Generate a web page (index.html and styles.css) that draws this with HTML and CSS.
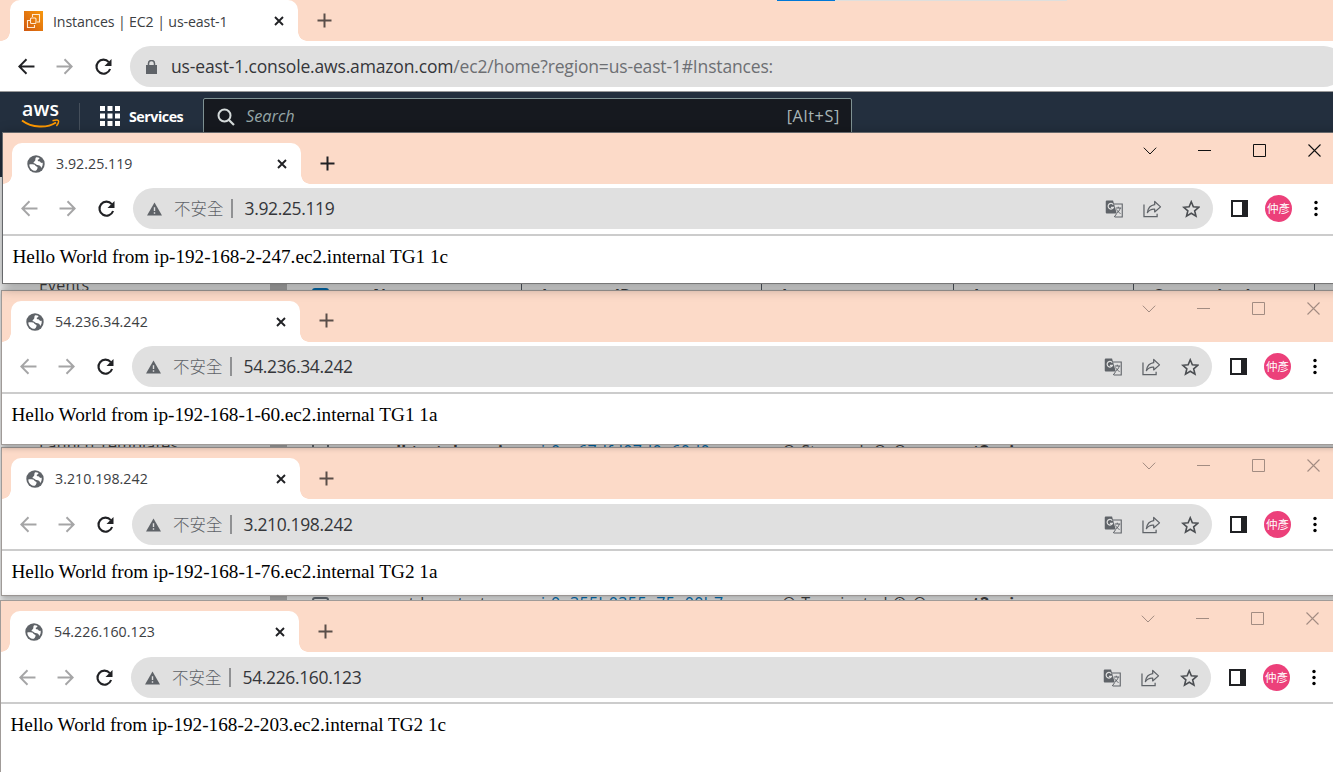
FILE: index.html
```html
<!DOCTYPE html>
<html lang="zh-Hant">
<head>
<meta charset="utf-8">
<title>Instances | EC2 | us-east-1</title>
<link rel="stylesheet" href="styles.css">
</head>
<body>
<svg class="defs" width="0" height="0" aria-hidden="true">
  <defs>
    <linearGradient id="ec2fill" x1="0" y1="1" x2="1" y2="0"><stop offset="0" stop-color="#cf5710"/><stop offset="1" stop-color="#f8980c"/></linearGradient>
    <symbol id="globe" viewBox="0 0 18 18"><circle cx="9" cy="9" r="8.7" fill="#5f6368"/><path d="M2.300 9.400c1.700-.2 3.300-.1 4.600.2 1.500.3 1.300 1.500 2.600 1.900 1.200.3 1.300 1.200.8 2.300-.4.900-.7 1.500-1.500 2C5.200 15.900 2.300 13 2.300 9.400zM8.900 2.400c1.300-.2 2.600 0 3.600.6-.2 1-.9 1.500-1.700 1.700-.2 1.200.3 1.500 1.400 1.500 1 0 1 .9 1.600 1.400.6.400 1.200.3 1.900.2.200 2.200-.3 3.800-1.400 5.200-.5-.9-.6-2.100-1.800-2.400-1.600-.4-2.200.1-3.200-1-.8-.9-2-1-2.800-1.500.1-1.200 1.100-1.500 1.600-2.300.5-.9 0-2.500.8-3.400z" fill="#fff"/></symbol>
    <symbol id="close" viewBox="0 0 10 10"><path d="M1 1l8 8M9 1l-8 8" stroke="currentColor" stroke-width="1.900" fill="none"/></symbol>
    <symbol id="plus" viewBox="0 0 15 15"><path d="M7.500.5v14M.5 7.500h14" stroke="currentColor" stroke-width="2" fill="none"/></symbol>
    <symbol id="back" viewBox="0 0 16 16"><path d="M15.500 8H1.500M8 1.200L1.200 8 8 14.800" stroke="currentColor" stroke-width="1.800" fill="none"/></symbol>
    <symbol id="forward" viewBox="0 0 16 16"><path d="M.5 8h14M8 1.200L14.800 8 8 14.800" stroke="currentColor" stroke-width="1.800" fill="none"/></symbol>
    <symbol id="reload" viewBox="0 0 18 18"><path d="M14.300 4.100A7 7 0 1 0 15.600 11" stroke="#202124" stroke-width="2.100" fill="none"/><path d="M17 1v7h-7z" fill="#202124"/></symbol>
    <symbol id="warn" viewBox="0 0 16 14"><path d="M8 0l8 14H0z" fill="#5f6368"/><path d="M8 5v4.200M8 10.500v1.600" stroke="#e0e0e0" stroke-width="1.500"/></symbol>
    <symbol id="translate" viewBox="0 0 18 18"><path d="M7 4h10v13H9.500" fill="#e0e0e0" stroke="#5f6368" stroke-width="1.100"/><path d="M1.500.5h6.300l3.700 13H1.500a1 1 0 0 1-1-1v-11a1 1 0 0 1 1-1z" fill="#5f6368"/><path d="M8 4.600A2.800 2.800 0 1 0 8.300 7.300H5.700" stroke="#e0e0e0" stroke-width="1.200" fill="none"/><path d="M10.500 8h5.500M13 6.700V8M15 8c-.6 2.400-2 4-3.500 5M11.300 9.500c1 2 2.200 3 4 4M9 17l2.500-3.500" stroke="#5f6368" stroke-width="1" fill="none"/></symbol>
    <symbol id="share" viewBox="0 0 19 18"><path d="M1 4.500v12.400h13.500v-3" stroke="#5f6368" stroke-width="1.300" fill="none"/><path d="M12 1.300l6 5.500-6 5.200V9.200c-3.300-.2-5.600.8-7.500 3.600.6-4.600 3-7.600 7.500-8.200z" stroke="#5f6368" stroke-width="1.300" fill="none" stroke-linejoin="round"/></symbol>
    <symbol id="star" viewBox="0 0 18 18"><path d="M9 1.800l2.100 5 5.400.5-4.100 3.500 1.300 5.300L9 13.300l-4.700 2.800 1.300-5.300L1.500 7.300l5.400-.5z" stroke="#4b4e52" stroke-width="1.600" fill="none"/></symbol>
    <symbol id="panel" viewBox="0 0 17 17"><path d="M0 0h17v17H0z" fill="#202124"/><path d="M2 2h9v13H2z" fill="#fff"/></symbol>
    <symbol id="dots" viewBox="0 0 4 16"><circle cx="2" cy="2" r="1.700"/><circle cx="2" cy="8" r="1.700"/><circle cx="2" cy="14" r="1.700"/></symbol>
    <symbol id="chev" viewBox="0 0 14 14"><path d="M.8 3.700L7 10l6.200-6.300" stroke="currentColor" stroke-width="1" fill="none"/></symbol>
    <symbol id="mini" viewBox="0 0 14 14"><path d="M0 6.500h13" stroke="currentColor" stroke-width="1"/></symbol>
    <symbol id="maxi" viewBox="0 0 14 14"><path d="M.5.5h12v12H.5z" stroke="currentColor" stroke-width="1" fill="none"/></symbol>
    <symbol id="exit" viewBox="0 0 14 14"><path d="M.5.5l12 12M12.500.5l-12 12" stroke="currentColor" stroke-width="1.100"/></symbol>
  </defs>
</svg>

<main class="desktop">
  <section class="window base">
    <div class="strip">
      <div class="tab">
        <svg class="fav" viewBox="0 0 19 20"><path d="M0 0h19v20H0z" fill="url(#ec2fill)"/><g stroke="#ffe9d2" stroke-width="1.100" fill="none"><path d="M8.500 6V3.500h7v7.500h-2.500"/><rect x="6.500" y="7" width="5.500" height="5.500" rx="1"/><path d="M6 9.500H3.500v7h7V14"/></g></svg>
        <span class="title">Instances | EC2 | us-east-1</span>
        <svg class="close"><use href="#close"/></svg>
      </div>
      <svg class="plus"><use href="#plus"/></svg>
    </div>
    <div class="toolbar">
      <svg class="nav on"><use href="#back"/></svg>
      <svg class="nav"><use href="#forward"/></svg>
      <svg class="reload"><use href="#reload"/></svg>
      <div class="omnibox">
        <svg class="lock" viewBox="0 0 11 14"><path d="M0 5h11v9H0z" fill="#5f6368"/><path d="M2.500 6V3.500a3 3 0 0 1 6 0V6" stroke="#5f6368" stroke-width="1.500" fill="none"/></svg>
        <span class="url">us-east-1.console.aws.amazon.com<span class="path">/ec2/home?region=us-east-1#Instances:</span></span>
      </div>
    </div>
    <header class="awsnav">
      <div class="logo"><span>aws</span><svg viewBox="0 0 40 10"><path d="M1 1.500C11 9 26 9.500 35 3.500" stroke="#f90" stroke-width="2" fill="none"/><path d="M31.500 1.800c3-.9 5.300-.9 5.800-.2.500.8-.3 3.400-1.900 5.300" stroke="#f90" stroke-width="1.500" fill="none"/></svg></div>
      <i class="rule"></i>
      <svg class="grid" viewBox="0 0 20 20" fill="#fff"><path d="M0 0h5v5H0zM7.500 0h5v5h-5zM15 0h5v5h-5zM0 7.500h5v5H0zM7.500 7.500h5v5h-5zM15 7.500h5v5h-5zM0 15h5v5H0zM7.500 15h5v5h-5zM15 15h5v5h-5z"/></svg>
      <b class="services">Services</b>
      <div class="search">
        <svg viewBox="0 0 18 18"><circle cx="7.500" cy="7.500" r="6" stroke="#d5dbdb" stroke-width="2" fill="none"/><path d="M12 12l5 5" stroke="#d5dbdb" stroke-width="2.200"/></svg>
        <em>Search</em><span class="hint">[Alt+S]</span>
      </div>
    </header>
    <div class="console">
      <aside class="side"><span>Events</span><span>Launch Templates</span></aside>
      <i class="scroll"></i>
      <div class="table">
        <div class="row head"><i class="box full"></i><b class="sort">Name <small>▲</small></b><b>Instance ID</b><b>Instance state</b><b>Instance type</b><b>Status check</b><b></b></div>
        <div class="row r1"><i class="box"></i><b>wall-test-demo-i</b><a>i-0ac67dfd07d0a60d0</a><span>⊖ Stopped &nbsp;⊕ ⊖</span><b class="type">t2.micro</b></div>
        <div class="row r2"><i class="box"></i><em>eventdemotest-s</em><a>i-0e355b0355a75a00b7</a><span>⊖ Terminated ⊕ ⊖</span><b class="type">t2.micro</b></div>
      </div>
    </div>
  </section>

  <section class="window w1">
    <div class="strip">
      <div class="tab"><svg class="fav"><use href="#globe"/></svg><span class="title">3.92.25.119</span><svg class="close"><use href="#close"/></svg></div>
      <svg class="plus"><use href="#plus"/></svg>
      <div class="controls"><svg><use href="#chev"/></svg><svg><use href="#mini"/></svg><svg><use href="#maxi"/></svg><svg><use href="#exit"/></svg></div>
    </div>
    <div class="toolbar">
      <svg class="nav"><use href="#back"/></svg><svg class="nav"><use href="#forward"/></svg><svg class="reload"><use href="#reload"/></svg>
      <div class="omnibox"><svg class="warn"><use href="#warn"/></svg><span class="unsafe">不安全</span><i class="sep"></i><span class="url">3.92.25.119</span>
        <div class="actions"><svg><use href="#translate"/></svg><svg><use href="#share"/></svg><svg><use href="#star"/></svg></div></div>
      <svg class="panel"><use href="#panel"/></svg><span class="avatar">仲彥</span><svg class="dots"><use href="#dots"/></svg>
    </div>
    <p class="page">Hello World from ip-192-168-2-247.ec2.internal TG1 1c</p>
  </section>

  <section class="window w2 idle">
    <div class="strip">
      <div class="tab"><svg class="fav"><use href="#globe"/></svg><span class="title">54.236.34.242</span><svg class="close"><use href="#close"/></svg></div>
      <svg class="plus"><use href="#plus"/></svg>
      <div class="controls"><svg><use href="#chev"/></svg><svg><use href="#mini"/></svg><svg><use href="#maxi"/></svg><svg><use href="#exit"/></svg></div>
    </div>
    <div class="toolbar">
      <svg class="nav"><use href="#back"/></svg><svg class="nav"><use href="#forward"/></svg><svg class="reload"><use href="#reload"/></svg>
      <div class="omnibox"><svg class="warn"><use href="#warn"/></svg><span class="unsafe">不安全</span><i class="sep"></i><span class="url">54.236.34.242</span>
        <div class="actions"><svg><use href="#translate"/></svg><svg><use href="#share"/></svg><svg><use href="#star"/></svg></div></div>
      <svg class="panel"><use href="#panel"/></svg><span class="avatar">仲彥</span><svg class="dots"><use href="#dots"/></svg>
    </div>
    <p class="page">Hello World from ip-192-168-1-60.ec2.internal TG1 1a</p>
  </section>

  <section class="window w3 idle">
    <div class="strip">
      <div class="tab"><svg class="fav"><use href="#globe"/></svg><span class="title">3.210.198.242</span><svg class="close"><use href="#close"/></svg></div>
      <svg class="plus"><use href="#plus"/></svg>
      <div class="controls"><svg><use href="#chev"/></svg><svg><use href="#mini"/></svg><svg><use href="#maxi"/></svg><svg><use href="#exit"/></svg></div>
    </div>
    <div class="toolbar">
      <svg class="nav"><use href="#back"/></svg><svg class="nav"><use href="#forward"/></svg><svg class="reload"><use href="#reload"/></svg>
      <div class="omnibox"><svg class="warn"><use href="#warn"/></svg><span class="unsafe">不安全</span><i class="sep"></i><span class="url">3.210.198.242</span>
        <div class="actions"><svg><use href="#translate"/></svg><svg><use href="#share"/></svg><svg><use href="#star"/></svg></div></div>
      <svg class="panel"><use href="#panel"/></svg><span class="avatar">仲彥</span><svg class="dots"><use href="#dots"/></svg>
    </div>
    <p class="page">Hello World from ip-192-168-1-76.ec2.internal TG2 1a</p>
  </section>

  <section class="window w4 idle">
    <div class="strip">
      <div class="tab"><svg class="fav"><use href="#globe"/></svg><span class="title">54.226.160.123</span><svg class="close"><use href="#close"/></svg></div>
      <svg class="plus"><use href="#plus"/></svg>
      <div class="controls"><svg><use href="#chev"/></svg><svg><use href="#mini"/></svg><svg><use href="#maxi"/></svg><svg><use href="#exit"/></svg></div>
    </div>
    <div class="toolbar">
      <svg class="nav"><use href="#back"/></svg><svg class="nav"><use href="#forward"/></svg><svg class="reload"><use href="#reload"/></svg>
      <div class="omnibox"><svg class="warn"><use href="#warn"/></svg><span class="unsafe">不安全</span><i class="sep"></i><span class="url">54.226.160.123</span>
        <div class="actions"><svg><use href="#translate"/></svg><svg><use href="#share"/></svg><svg><use href="#star"/></svg></div></div>
      <svg class="panel"><use href="#panel"/></svg><span class="avatar">仲彥</span><svg class="dots"><use href="#dots"/></svg>
    </div>
    <p class="page">Hello World from ip-192-168-2-203.ec2.internal TG2 1c</p>
  </section>
  <i class="loadbar"></i>
</main>
</body>
</html>
```

FILE: styles.css
```css
* { box-sizing: border-box; }
body { margin: 0; font-family: "Open Sans", "Noto Sans", "Noto Sans CJK TC", sans-serif; }
svg { display: block; flex: none; }
.defs { position: absolute; }

.desktop { position: relative; width: 1333px; height: 772px; overflow: hidden; background: #fff; }

/* Browser windows on the desktop */
.window { position: absolute; width: 1345px; background: #fff; border: 1px solid #a09b98; border-right: 0; }
.w1 { left: 2px; top: 132px; height: 152px; z-index: 5; border-color: #66686b; border-bottom-color: #777; box-shadow: 0 3px 12px rgba(0, 0, 0, .42); }
.w2 { left: 1px; top: 290px; height: 155px; z-index: 4; box-shadow: 0 1px 7px rgba(0, 0, 0, .4); }
.w3 { left: 1px; top: 447px; height: 149px; z-index: 2; box-shadow: 0 1px 6px rgba(0, 0, 0, .38); }
.w4 { left: 0; top: 600px; height: 180px; z-index: 3; box-shadow: 0 1px 9px rgba(0, 0, 0, .35); }

.strip { display: flex; height: 51px; padding: 10px 0 0 9px; background: #fcdac8; }
.tab { position: relative; display: flex; align-items: center; width: 289px; height: 41px; padding: 0 14.500px 0 15px; background: #fff; border-radius: 10px 10px 0 0; }
.tab::before, .tab::after { content: ""; position: absolute; bottom: 0; width: 9px; height: 9px; }
.tab::before { left: -9px; background: radial-gradient(circle at 0 0, #fcdac8 8.500px, #fff 9px); }
.tab::after { right: -9px; background: radial-gradient(circle at 100% 0, #fcdac8 8.500px, #fff 9px); }
.fav { width: 18px; height: 18px; margin-right: 11px; }
.title { flex: 1; font-size: 14.200px; letter-spacing: .04px; color: #3c4043; white-space: nowrap; }
.close { width: 10px; height: 10px; color: #202124; }
.plus { width: 15px; height: 15px; margin: 12.500px 0 0 18.500px; color: #202124; }
.idle .plus, .base .plus { color: #5a4e49; }
.w2 .plus { margin-top: 12px; }
.controls { display: flex; gap: 41px; margin: 1px 0 0 808px; color: #111; }
.controls svg { width: 14px; height: 14px; }
.idle .controls { color: #a28c82; }

.toolbar { display: flex; align-items: center; height: 52px; padding: 0 0 1px 18px; border-bottom: 2px solid #ccc; }
.w3 .toolbar, .w4 .toolbar { padding: 1px 0 0 18px; }
.nav { width: 17px; height: 17px; margin-right: 21px; color: #a5a5a6; }
.nav.on { color: #202124; }
.reload { width: 19px; height: 18px; margin-right: 16.500px; }
.omnibox { display: flex; align-items: center; width: 1080px; height: 41px; padding: 0 12.500px 0 14.500px; border-radius: 21px; background: #e0e0e0; }
.warn { width: 15px; height: 14px; }
.unsafe { width: 49px; margin: -1px 0 0 12px; font: 300 16.500px/20px "Noto Sans CJK TC", sans-serif; color: #5f6368; white-space: nowrap; }
.sep { width: 1.500px; height: 19px; margin: 0 12px 0 8px; background: #909193; }
.url { margin-top: -1px; font-size: 17.500px; letter-spacing: -.36px; color: #35363a; white-space: nowrap; }
.actions { display: flex; gap: 20px; margin-left: auto; }
.actions svg { width: 18.500px; height: 18px; }
.panel { width: 17px; height: 17px; margin-left: 18px; }
.avatar { width: 27px; height: 27px; margin: 0 22px 0 17.500px; border-radius: 50%; background: #ec407a; color: #fff; font: 11.500px/27px "Noto Sans CJK TC", sans-serif; text-align: center; }
.dots { width: 4px; height: 17px; }
.page { margin: 0; padding: 10px 0 0 9.500px; font: 19.220px/22px "Liberation Serif", serif; color: #000; white-space: nowrap; }

/* EC2 console window at the back */
.base { left: -1px; top: 0; height: 772px; border: 0; }
.base .strip { height: 41px; padding: 0 0 0 11px; }
.base .tab { width: 288px; padding-left: 14px; }
.base .fav { width: 19px; height: 20px; margin-right: 10px; }
.base .title { padding-top: 1px; letter-spacing: -.14px; }
.base .toolbar { height: 51px; padding: 1px 0 0 19px; border-bottom-width: 1px; border-color: #999; }
.base .omnibox { width: 1250px; padding-left: 16.500px; }
.base .url { letter-spacing: -.16px; }
.lock { width: 11px; height: 14px; margin-right: 14px; }
.path { color: #6d6f73; }
.awsnav { display: flex; height: 85px; padding: 6px 0 0 23px; background: #232f3e; }
.logo { width: 40px; color: #fff; font: 600 19.500px/22px "Open Sans", sans-serif; letter-spacing: .2px; }
.logo svg { width: 40px; height: 10px; margin: -1px 0 0 -1px; }
.rule { width: 1px; height: 27px; margin: 5px 20px 0 17px; background: #454f5b; }
.grid { width: 20px; height: 20px; margin-top: 8px; }
.services { width: 74px; margin: 9px 0 0 9px; font-size: 14.300px; line-height: 20px; letter-spacing: -.5px; color: #fff; }
.search { display: flex; align-items: flex-start; width: 649px; height: 50px; padding: 8px 11px 0 13px; background: #16191f; border: 1px solid #7f9293; border-radius: 2px; color: #95a5a6; font-size: 16.300px; line-height: 18px; }
.search svg { width: 18px; height: 18px; margin: 1px 11px 0 0; }
.hint { margin-left: auto; letter-spacing: .6px; color: #a9b5b6; }

.console { display: flex; height: 595px; padding-left: 1px; font-size: 16px; line-height: 20px; color: #444; background: #f2f3f3; }
.side { width: 270px; padding: 98px 0 0 39px; display: flex; flex-direction: column; gap: 140px; letter-spacing: .2px; }
.scroll { width: 17px; background: #b5b5b5; }
.table { width: 1046px; padding-top: 106px; }
.row { display: grid; grid-template-columns: 86px 148px 240px 192px 180px 181px 1fr; height: 40px; white-space: nowrap; }
.head b + b { border-left: 1px solid #545b64; padding-left: 20px; }
.head b { padding-top: 2px; }
.sort small { margin-left: 12px; }
.row .box { width: 17px; height: 17px; margin: 5px 0 0 25px; border: 2px solid #687078; border-radius: 3px; }
.row .full { background: #0073bb; border-color: #0073bb; }
.row a { padding-left: 20px; letter-spacing: .4px; color: #0073bb; }
.row em { font-style: normal; }
.row span, .type { padding-left: 20px; }
.r1 { margin-top: 118px; }
.r1 .box { margin-top: -1px; }
.r2 { margin-top: 112px; }
.r2 .box { margin-top: 4px; }

.loadbar { position: absolute; z-index: 6; left: 777px; top: 0; width: 290px; height: 1px; background: linear-gradient(90deg, #0078d7 58px, #dfdfdd 58px); }
```
